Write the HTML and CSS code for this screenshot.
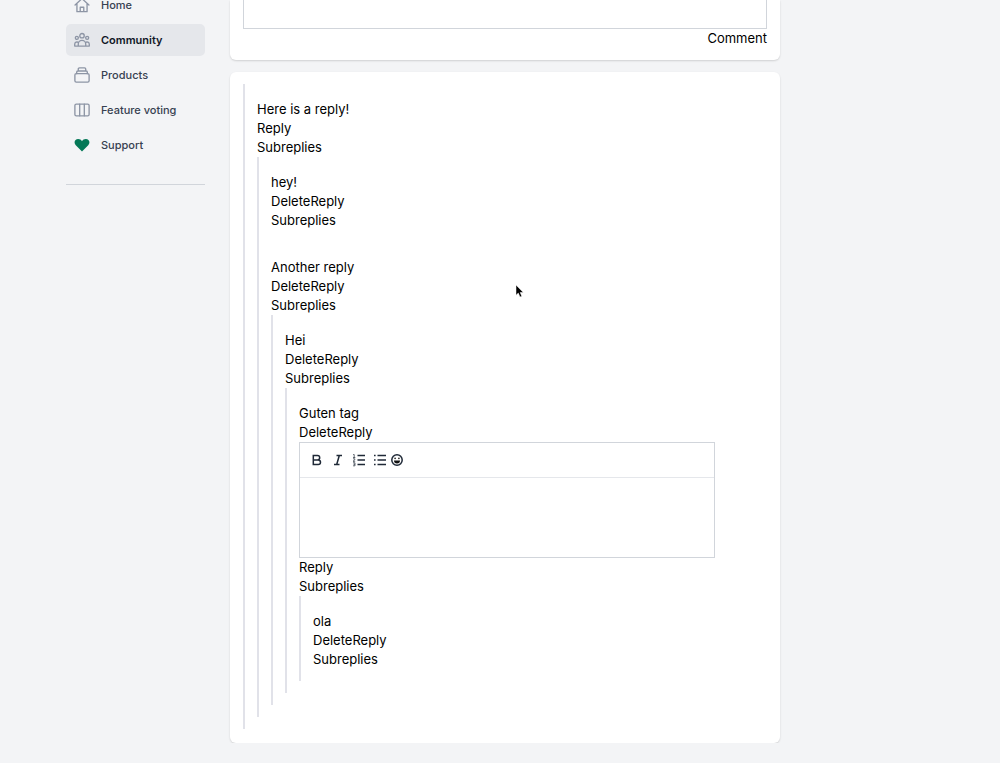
FILE: index.html
```html
<!DOCTYPE html>
<html lang="en">
<head>
  <meta charset="UTF-8">
  <meta name="viewport" content="width=device-width, initial-scale=1.0">
  <title>Community</title>
  <link rel="stylesheet" href="styles.css">
</head>
<body>
  <div class="page">
    <nav class="sidebar">
      <a class="nav-link" href="#">
        <svg viewBox="0 0 18 18"><path d="M1.2 9 9 1.8 16.8 9M3.3 7.5v9h11.4v-9M7 16.500v-5h4v5"/></svg>
        Home
      </a>
      <a class="nav-link active" href="#">
        <svg viewBox="0 0 18 18"><circle cx="9" cy="4.200" r="2.500"/><circle cx="3.200" cy="6.600" r="1.700"/><circle cx="14.800" cy="6.600" r="1.700"/><path d="M4.800 15.800v-2.200a4.200 4.200 0 0 1 8.400 0v2.200zM4.800 15.800H.8v-2a2.600 2.600 0 0 1 4.200-2M13.200 15.800h4v-2a2.600 2.600 0 0 0-4.200-2"/></svg>
        Community
      </a>
      <a class="nav-link" href="#">
        <svg viewBox="0 0 18 18"><rect x="1" y="7.500" width="16" height="9.500" rx="1.600"/><path d="M3 7.500V5.800a1.300 1.300 0 0 1 1.300-1.300h9.400A1.300 1.300 0 0 1 15 5.800v1.700M4.800 4.500V2.300A1.300 1.300 0 0 1 6.100 1h5.800a1.300 1.300 0 0 1 1.300 1.300v2.200"/></svg>
        Products
      </a>
      <a class="nav-link" href="#">
        <svg viewBox="0 0 18 18"><rect x="1" y="2.400" width="16" height="13.200" rx="1.600"/><path d="M6.400 2.400v13.200M11.600 2.400v13.200"/></svg>
        Feature voting
      </a>
      <a class="nav-link" href="#">
        <svg class="heart" viewBox="0 0 18 18"><path d="M9 16.200 2 9.300C-.8 6.200 1 2.200 4.700 2.200c1.900 0 3.400 1 4.300 2.500.9-1.500 2.400-2.500 4.300-2.500C17 2.200 18.800 6.200 16 9.300z"/></svg>
        Support
      </a>
      <hr class="divider">
    </nav>

    <main class="content">
      <section class="card card-comment">
        <textarea class="comment-box" aria-label="Comment"></textarea>
        <button class="text-button">Comment</button>
      </section>

      <section class="card card-replies">
        <div class="replies">
          <article class="reply">
            <p>Here is a reply!</p>
            <div class="actions"><button class="text-button">Reply</button></div>
            <p>Subreplies</p>
            <div class="replies">
              <article class="reply">
                <p>hey!</p>
                <div class="actions"><button class="text-button">Delete</button><button class="text-button">Reply</button></div>
                <p>Subreplies</p>
              </article>
              <article class="reply">
                <p>Another reply</p>
                <div class="actions"><button class="text-button">Delete</button><button class="text-button">Reply</button></div>
                <p>Subreplies</p>
                <div class="replies">
                  <article class="reply">
                    <p>Hei</p>
                    <div class="actions"><button class="text-button">Delete</button><button class="text-button">Reply</button></div>
                    <p>Subreplies</p>
                    <div class="replies">
                      <article class="reply">
                        <p>Guten tag</p>
                        <div class="actions"><button class="text-button">Delete</button><button class="text-button">Reply</button></div>
                        <div class="editor">
                          <div class="toolbar">
                            <button class="tool" aria-label="Bold">
                              <svg viewBox="0 0 14 14"><path d="M3.300 2.500h4.200a2.200 2.200 0 0 1 0 4.400H3.300zM3.300 6.900h4.900a2.300 2.300 0 0 1 0 4.600H3.300z"/></svg>
                            </button>
                            <button class="tool" aria-label="Italic">
                              <svg viewBox="0 0 14 14"><path d="M5.500 2.500h5.500M3 11.500h5.500M8.300 2.500l-2.600 9"/></svg>
                            </button>
                            <button class="tool" aria-label="Ordered list">
                              <svg viewBox="0 0 14 14"><path d="M5.500 2.500H13M5.500 7H13M5.500 11.500H13"/><path class="thin" d="M1.200 1.500h1v3M1 4.500h2.300M1 5.800h1.800v1L1 8.300h2.200M1 9.800h2v3H1M1.500 11.300H3"/></svg>
                            </button>
                            <button class="tool" aria-label="Bullet list">
                              <svg viewBox="0 0 14 14"><path d="M4.500 2.500H13M4.500 7H13M4.500 11.500H13M1 2.500h1.600M1 7h1.600M1 11.500h1.600"/></svg>
                            </button>
                            <button class="tool tool-emoji" aria-label="Emoji">
                              <svg viewBox="0 0 14 14"><circle cx="7" cy="7" r="5.200"/><path class="solid" d="M4 7.600h6a3 3 0 0 1-6 0z"/><circle class="solid" cx="5.100" cy="5.400" r=".8"/><circle class="solid" cx="8.900" cy="5.400" r=".8"/></svg>
                            </button>
                          </div>
                          <textarea class="editor-text" aria-label="Write a reply"></textarea>
                        </div>
                        <div class="actions"><button class="text-button">Reply</button></div>
                        <p>Subreplies</p>
                        <div class="replies">
                          <article class="reply">
                            <p>ola</p>
                            <div class="actions"><button class="text-button">Delete</button><button class="text-button">Reply</button></div>
                            <p>Subreplies</p>
                          </article>
                        </div>
                      </article>
                    </div>
                  </article>
                </div>
              </article>
            </div>
          </article>
        </div>
      </section>
    </main>
  </div>

  <svg class="cursor" viewBox="0 0 9 14"><path d="M1 1v10.200l2.300-2.100 1.700 3.900 1.800-.8L5.200 8.500h3.100z"/></svg>
</body>
</html>
```

FILE: styles.css
```css
* {
  box-sizing: border-box;
}

body {
  font-family: Inter, sans-serif;
  font-size: 13px;
  line-height: 19px;
  color: #000;
  background-color: #f3f4f6;
  margin: 0;
}

p {
  margin: 0;
}

.page {
  display: grid;
  grid-template-columns: 139px minmax(0, 1fr) 129px;
  gap: 25px;
  max-width: 1000px;
  margin: 0 auto;
  padding: 0 66px;
}

/* Sidebar */
.sidebar {
  display: flex;
  flex-direction: column;
  gap: 3px;
  margin-top: -11px;
}

.nav-link {
  display: flex;
  align-items: center;
  gap: 11px;
  height: 32px;
  padding: 0 8px;
  border-radius: 5px;
  color: #374151;
  font-size: 11px;
  font-weight: 500;
  line-height: 10px;
  text-decoration: none;
}

.nav-link.active {
  background-color: #e5e7eb;
  color: #111827;
  font-weight: 600;
}

.nav-link svg {
  width: 16px;
  height: 16px;
  fill: none;
  stroke: #8d95a5;
  stroke-width: 1.5;
  stroke-linejoin: round;
  stroke-linecap: round;
}

.nav-link .heart {
  fill: #047857;
  stroke: none;
}

.divider {
  width: 100%;
  margin: 20px 0 0;
  border: 0;
  border-top: 1px solid #d1d5db;
}

/* Cards */
.content {
  display: flex;
  flex-direction: column;
  gap: 12px;
}

.card {
  background-color: #fff;
  border-radius: 6px;
  box-shadow: 0 1px 2px rgba(0, 0, 0, 0.15);
}

.card-comment {
  display: flex;
  flex-direction: column;
  align-items: flex-end;
  padding: 0 13px 12px;
  border-radius: 0 0 6px 6px;
}

.card-replies {
  padding: 12px 13px 14px;
}

textarea {
  display: block;
  width: 100%;
  padding: 8px 12px;
  border: 0;
  background-color: #fff;
  font: inherit;
  resize: none;
}

.comment-box {
  height: 29px;
  border: 1px solid #d1d5db;
  border-top: 0;
}

.text-button {
  padding: 0;
  border: 0;
  background: none;
  color: inherit;
  font: inherit;
  cursor: pointer;
}

/* Reply threads */
.replies {
  border-left: 2px solid #e1e2e9;
}

.reply {
  padding: 16px 13px 12px 12px;
}

.actions {
  display: flex;
}

/* Editor */
.editor {
  border: 1px solid #d1d5db;
}

.toolbar {
  display: flex;
  align-items: center;
  gap: 7px;
  height: 35px;
  padding: 0 10px;
  border-bottom: 1px solid #e5e7eb;
}

.tool {
  display: flex;
  padding: 0;
  border: 0;
  background: none;
  cursor: pointer;
}

.tool svg {
  width: 14px;
  height: 14px;
  fill: none;
  stroke: #1f2937;
  stroke-width: 1.5;
}

.tool .thin {
  stroke-width: 0.7;
}

.tool .solid {
  fill: #111;
  stroke: none;
}

.tool-emoji {
  margin-left: -4px;
}

.editor-text {
  height: 79px;
}

/* Pointer drawn over the page */
.cursor {
  position: absolute;
  left: 515px;
  top: 284px;
  width: 9px;
  height: 14px;
  stroke: #fff;
  stroke-width: 0.5;
}
```
